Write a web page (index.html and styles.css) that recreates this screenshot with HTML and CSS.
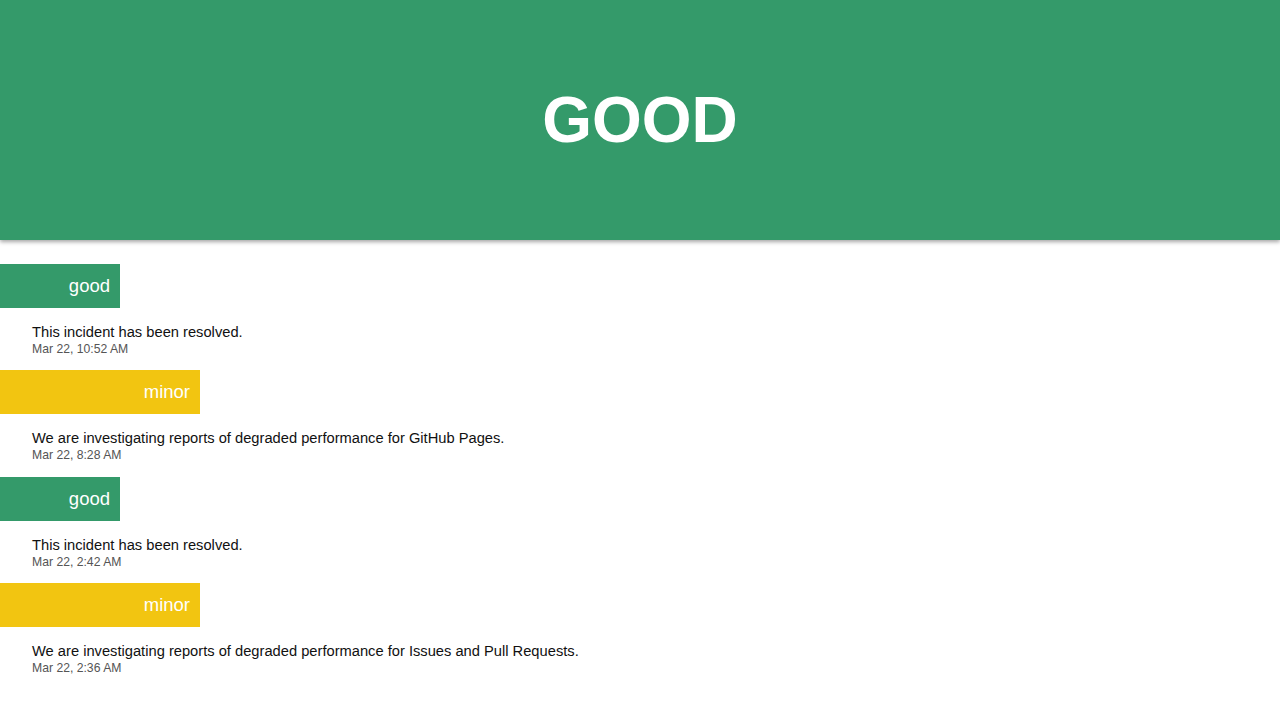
FILE: index.html
```html
<!DOCTYPE html>
<html>
<head>
<meta charset="utf-8">
<link rel="stylesheet" href="styles.css">
</head>
<body>
<header class="hero"><h1 class="hero-title">GOOD</h1></header>
<main class="feed">
  <section class="item">
    <div class="badge badge-good">good</div>
    <div class="body">
      <p class="msg">This incident has been resolved.</p>
      <p class="date">Mar 22, 10:52 AM</p>
    </div>
  </section>
  <section class="item">
    <div class="badge badge-minor">minor</div>
    <div class="body">
      <p class="msg">We are investigating reports of degraded performance for GitHub Pages.</p>
      <p class="date">Mar 22, 8:28 AM</p>
    </div>
  </section>
  <section class="item">
    <div class="badge badge-good">good</div>
    <div class="body">
      <p class="msg">This incident has been resolved.</p>
      <p class="date">Mar 22, 2:42 AM</p>
    </div>
  </section>
  <section class="item">
    <div class="badge badge-minor">minor</div>
    <div class="body">
      <p class="msg">We are investigating reports of degraded performance for Issues and Pull Requests.</p>
      <p class="date">Mar 22, 2:36 AM</p>
    </div>
  </section>
</main>
</body>
</html>
```
FILE: styles.css
```css
html, body {
  margin: 0;
  padding: 0;
  background: #ffffff;
  font-family: "Liberation Sans", Arial, Helvetica, sans-serif;
}
.hero {
  height: 240px;
  background: #349a6a;
  display: flex;
  align-items: center;
  justify-content: center;
  box-shadow: 0 2px 4px rgba(0, 0, 0, 0.35);
}
.hero-title {
  margin: 0;
  color: #ffffff;
  font-size: 64px;
  font-weight: bold;
  line-height: 1;
}
.feed {
  padding-top: 24px;
  display: flex;
  flex-direction: column;
}
.item {
  display: flex;
  flex-direction: column;
  height: 106.33px;
}
.badge {
  height: 44px;
  box-sizing: border-box;
  padding-right: 10px;
  display: flex;
  align-items: center;
  justify-content: flex-end;
  color: #ffffff;
  font-size: 18.5px;
}
.badge-good {
  width: 120px;
  background: #349a6a;
}
.badge-minor {
  width: 200px;
  background: #f2c511;
}
.body {
  padding: 14px 0 0 32px;
}
.msg {
  margin: 0;
  font-size: 14.7px;
  line-height: 20px;
  color: #111;
}
.date {
  margin: 0;
  font-size: 12.2px;
  line-height: 14px;
  color: #555;
}
```
